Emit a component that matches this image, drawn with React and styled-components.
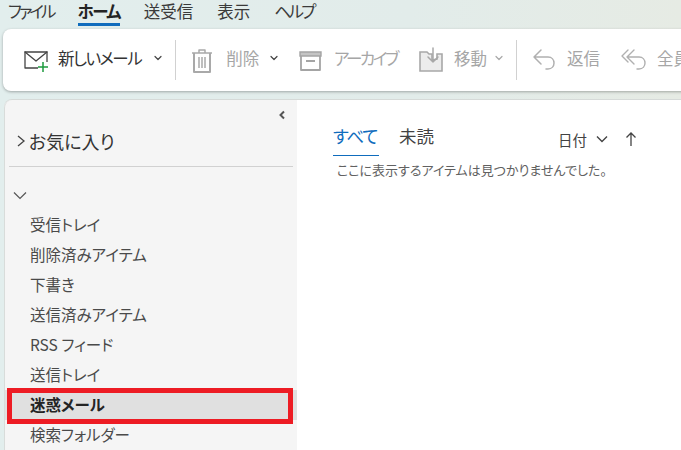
import React from "react";
import styled, { createGlobalStyle } from "styled-components";

const Global = createGlobalStyle`
  html, body { margin: 0; padding: 0; background: #e4eeeb; }
  * { box-sizing: border-box; }
`;

const Page = styled.div`
  width: 681px;
  height: 450px;
  overflow: hidden;
  display: flex;
  flex-direction: column;
  background: linear-gradient(90deg, #e2eeed 0%, #e2ecea 60%, #e6ebe4 100%);
  font-family: "Noto Sans CJK JP", "Noto Sans", sans-serif;
  font-feature-settings: "palt";
  color: #424242;
`;

const MenuBar = styled.nav`
  height: 29px;
  flex: none;
  display: flex;
  gap: 24px;
  padding-left: 8px;
  padding-top: 2px;
`;

const MenuTab = styled.div`
  height: 24px;
  font-size: 16.5px;
  line-height: 19px;
  letter-spacing: ${(p) => p.$track || 0}px;
  font-weight: ${(p) => (p.$active ? 700 : 400)};
  color: ${(p) => (p.$active ? "#242424" : "#3a3a3a")};
  border-bottom: ${(p) => (p.$active ? "3px solid #0f6cbd" : "none")};
`;

const Toolbar = styled.div`
  height: 62px;
  flex: none;
  margin-left: 3px;
  width: 700px;
  background: #fff;
  border-radius: 8px;
  display: flex;
  align-items: center;
  padding-left: 20px;
  box-shadow: 0 1px 3px rgba(0, 0, 0, 0.3);
  white-space: nowrap;
  overflow: hidden;
`;

const Action = styled.div`
  display: flex;
  align-items: center;
  flex: none;
  margin-right: ${(p) => p.$mr || 0}px;
`;

const ActionIcon = styled.svg`
  width: 26px;
  height: 26px;
  flex: none;
  margin-right: ${(p) => p.$mr || 9}px;
`;

const ActionLabel = styled.span`
  font-size: 16.5px;
  line-height: 22px;
  padding-bottom: 4px;
  letter-spacing: ${(p) => p.$track || 0}px;
  color: ${(p) => (p.$on ? "#333" : "#a6a6a6")};
`;

const Caret = styled.svg`
  width: 8px;
  height: 6px;
  flex: none;
  margin-left: ${(p) => p.$ml || 12}px;
  margin-bottom: 4px;
`;

const ToolSep = styled.div`
  width: 1px;
  height: 40px;
  flex: none;
  background: #d1d1d1;
  margin-right: ${(p) => p.$mr}px;
`;

const Body = styled.div`
  flex: 1;
  display: flex;
  margin-top: 8px;
  margin-left: 4px;
  min-height: 0;
  background: #fff;
  border-top-left-radius: 8px;
  border-top: 1px solid #d6dad8;
`;

const Sidebar = styled.aside`
  width: 293px;
  flex: none;
  background: #f5f5f5;
  display: flex;
  flex-direction: column;
  border-top-left-radius: 8px;
  border-left: 1px solid #d8dcda;
  padding-top: 7px;
`;

const CollapseRow = styled.div`
  height: 16px;
  flex: none;
  display: flex;
  justify-content: flex-end;
  align-items: center;
  padding-right: 11px;
`;

const FavRow = styled.div`
  height: 35px;
  flex: none;
  display: flex;
  align-items: center;
  padding-left: 11px;
  font-size: 18px;
  color: #333;
`;

const Divider = styled.div`
  height: 1px;
  flex: none;
  margin: 8px 4px 0 4px;
  background: #d1d1d1;
`;

const AccountRow = styled.div`
  height: 28px;
  flex: none;
  margin-top: 15px;
  padding-bottom: 2px;
  display: flex;
  align-items: center;
  padding-left: 8px;
`;

const FolderRow = styled.div`
  height: 30px;
  flex: none;
  padding-left: 25px;
  padding-bottom: 2px;
  display: flex;
  align-items: center;
  font-size: 15.5px;
  color: #4a4a4a;
  position: relative;
  ${(p) =>
    p.$selected &&
    `
    font-weight: 700;
    color: #242424;
    background: #e0e0e0;
    &::after {
      content: "";
      box-sizing: border-box;
      position: absolute;
      left: 2px;
      top: -2px;
      width: 286px;
      height: 36px;
      border: 5px solid #ed1c24;
    }
  `}
`;

const Main = styled.main`
  flex: 1;
  padding: 0 0 0 36px;
`;

const ListHead = styled.div`
  height: 57px;
  display: flex;
  padding-top: 22px;
`;

const Tab = styled.div`
  height: 34px;
  font-size: 17.5px;
  line-height: 27px;
  margin-right: 20px;
  letter-spacing: ${(p) => p.$track || 0}px;
  color: ${(p) => (p.$active ? "#0f6cbd" : "#424242")};
  border-bottom: ${(p) => (p.$active ? "1px solid #0f6cbd" : "none")};
  width: ${(p) => (p.$active ? "46px" : "auto")};
  white-space: nowrap;
`;

const SortGroup = styled.div`
  margin-left: 104px;
  display: flex;
  align-items: center;
  height: 34px;
  font-size: 14.5px;
  color: #424242;
`;

const EmptyText = styled.p`
  margin: 4px 0 0 4px;
  font-size: 13px;
  line-height: 18px;
  color: #616161;
  white-space: nowrap;
`;

const S = { fill: "none", strokeLinecap: "round", strokeLinejoin: "round" };

function MailPlus() {
  return (
    <ActionIcon viewBox="0 0 26 26" $mr={9}>
      <path d="M15 21H2V5h22v10" {...S} stroke="#444" strokeWidth="1.3" strokeLinecap="butt" />
      <path d="M2 5l11 9 11-9" {...S} stroke="#444" strokeWidth="1.3" />
      <path d="M20 15v10M15 20h10" {...S} stroke="#1d9a3e" strokeWidth="1.5" strokeLinecap="butt" />
    </ActionIcon>
  );
}

function Trash() {
  return (
    <ActionIcon viewBox="0 0 26 26" $mr={11}>
      <g {...S} stroke="#a9a9a9" strokeWidth="1.5" strokeLinecap="butt">
        <path d="M3 6h20M10 6V3h6v3" />
        <path d="M5 6v19h16V6" strokeWidth="2" />
        <path d="M10 10v11M13 10v11M16 10v11" />
      </g>
    </ActionIcon>
  );
}

function Archive() {
  return (
    <ActionIcon viewBox="0 0 26 26" $mr={11}>
      <path d="M3 5h21v4H3z" fill="#c4c4c4" stroke="#a4a4a4" strokeWidth="1.4" />
      <g {...S} stroke="#a4a4a4" strokeWidth="1.8" strokeLinecap="butt">
        <path d="M4 9v14h19V9" />
        <path d="M9 14h9" />
      </g>
    </ActionIcon>
  );
}

function Move() {
  return (
    <ActionIcon viewBox="0 0 26 26" $mr={10}>
      <path d="M2 5h7l2 2h3v6l5-1V7h5v17H2z" fill="#ececec" stroke="#a8a8a8" strokeWidth="1.6" />
      <path d="M15 1v14M10 10l5 5 5-5" {...S} stroke="#a8a8a8" strokeWidth="1.5" />
    </ActionIcon>
  );
}

function Reply() {
  return (
    <ActionIcon viewBox="0 0 26 26" $mr={10}>
      <path d="M10 3L3 10l7 7M3 10h14c8 0 8 12 0 12h-2" {...S} stroke="#b0b0b0" strokeWidth="1.5" />
    </ActionIcon>
  );
}

function ReplyAll() {
  return (
    <ActionIcon viewBox="0 0 26 26" $mr={10}>
      <path d="M7 3L1 9l6 6M13 3L6 10l7 7M6 10h12c8 0 8 12 0 12h-2" {...S} stroke="#b0b0b0" strokeWidth="1.4" />
    </ActionIcon>
  );
}

function Down({ color = "#444", ml }) {
  return (
    <Caret viewBox="0 0 8 6" $ml={ml}>
      <path d="M1 1.5l3 3 3-3" {...S} stroke={color} strokeWidth="1.2" />
    </Caret>
  );
}

const folders = ["受信トレイ", "削除済みアイテム", "下書き", "送信済みアイテム", "RSS フィード", "送信トレイ"];

export default function App() {
  return (
    <Page>
      <Global />
      <MenuBar>
        <MenuTab $track={-2.9}>ファイル</MenuTab>
        <MenuTab $active $track={-1.6}>ホーム</MenuTab>
        <MenuTab>送受信</MenuTab>
        <MenuTab>表示</MenuTab>
        <MenuTab $track={-2.6}>ヘルプ</MenuTab>
      </MenuBar>
      <Toolbar>
        <Action $mr={13}>
          <MailPlus />
          <ActionLabel $on $track={-1.5}>新しいメール</ActionLabel>
          <Down ml={13} />
        </Action>
        <ToolSep $mr={13} />
        <Action $mr={19}>
          <Trash />
          <ActionLabel>削除</ActionLabel>
          <Down ml={11} />
        </Action>
        <Action $mr={21}>
          <Archive />
          <ActionLabel $track={-2.4}>アーカイブ</ActionLabel>
        </Action>
        <Action $mr={13}>
          <Move />
          <ActionLabel>移動</ActionLabel>
          <Down color="#a8a8a8" ml={8} />
        </Action>
        <ToolSep $mr={14} />
        <Action $mr={21}>
          <Reply />
          <ActionLabel>返信</ActionLabel>
        </Action>
        <Action>
          <ReplyAll />
          <ActionLabel>全員に返信</ActionLabel>
        </Action>
      </Toolbar>
      <Body>
        <Sidebar>
          <CollapseRow>
            <svg width="8" height="10" viewBox="0 0 8 10">
              <path d="M6 1.5L2.5 5 6 8.500" fill="none" stroke="#555" strokeWidth="2" />
            </svg>
          </CollapseRow>
          <FavRow>
            <svg width="10" height="14" viewBox="0 0 10 14" style={{ marginRight: 3 }}>
              <path d="M2 2l6 5-6 5" fill="none" stroke="#444" strokeWidth="1.3" />
            </svg>
            お気に入り
          </FavRow>
          <Divider />
          <AccountRow>
            <svg width="14" height="9" viewBox="0 0 14 9">
              <path d="M1 1.500l6 6 6-6" fill="none" stroke="#555" strokeWidth="1.2" />
            </svg>
          </AccountRow>
          {folders.map((f) => (
            <FolderRow key={f}>{f}</FolderRow>
          ))}
          <FolderRow $selected>迷惑メール</FolderRow>
          <FolderRow>検索フォルダー</FolderRow>
        </Sidebar>
        <Main>
          <ListHead>
            <Tab $active $track={-1.3}>すべて</Tab>
            <Tab>未読</Tab>
            <SortGroup>
              日付
              <svg width="14" height="9" viewBox="0 0 14 9" style={{ marginLeft: 8 }}>
                <path d="M2 1.500l5 5 5-5" fill="none" stroke="#444" strokeWidth="1.4" />
              </svg>
              <svg width="14" height="16" viewBox="0 0 14 16" style={{ marginLeft: 15 }}>
                <path d="M7 15V2M2.500 6.500L7 2l4.500 4.500" fill="none" stroke="#444" strokeWidth="1.3" />
              </svg>
            </SortGroup>
          </ListHead>
          <EmptyText>ここに表示するアイテムは見つかりませんでした。</EmptyText>
        </Main>
      </Body>
    </Page>
  );
}
